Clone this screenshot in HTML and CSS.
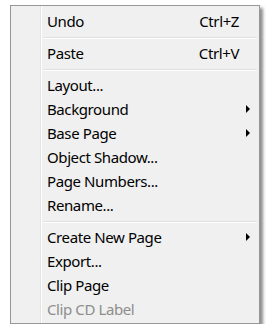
FILE: index.html
```html
<!DOCTYPE html>
<html lang="en">
<head>
    <meta charset="UTF-8">
    <title>Context Menu</title>
    <link rel="stylesheet" href="styles.css">
</head>
<body>
    <div class="menu">
        <div class="item"><span class="label">Undo</span><span class="key">Ctrl+Z</span><span class="sub"></span></div>
        <div class="sep"></div>
        <div class="item"><span class="label">Paste</span><span class="key">Ctrl+V</span><span class="sub"></span></div>
        <div class="sep"></div>
        <div class="item"><span class="label">Layout...</span><span class="key"></span><span class="sub"></span></div>
        <div class="item"><span class="label">Background</span><span class="key"></span><span class="sub"><i class="arrow"></i></span></div>
        <div class="item"><span class="label">Base Page</span><span class="key"></span><span class="sub"><i class="arrow"></i></span></div>
        <div class="item"><span class="label">Object Shadow...</span><span class="key"></span><span class="sub"></span></div>
        <div class="item"><span class="label">Page Numbers...</span><span class="key"></span><span class="sub"></span></div>
        <div class="item"><span class="label">Rename...</span><span class="key"></span><span class="sub"></span></div>
        <div class="sep"></div>
        <div class="item"><span class="label">Create New Page</span><span class="key"></span><span class="sub"><i class="arrow"></i></span></div>
        <div class="item"><span class="label">Export...</span><span class="key"></span><span class="sub"></span></div>
        <div class="item"><span class="label">Clip Page</span><span class="key"></span><span class="sub"></span></div>
        <div class="item disabled"><span class="label">Clip CD Label</span><span class="key"></span><span class="sub"></span></div>
    </div>
</body>
</html>
```

FILE: styles.css
```css
body {
    margin: 0;
    background-color: #ffffff;
    font-family: "Noto Sans", "Open Sans", sans-serif;
    font-size: 15px;
    letter-spacing: -0.4px;
    color: #000000;
}
.menu {
    width: 244px;
    margin: 5px 0 0 10px;
    padding: 3px 2px 2px 2px;
    border: 1px solid #979797;
    background: linear-gradient(to right, transparent 29px, #e2e3e3 29px, #e2e3e3 30px, #ffffff 30px, #ffffff 31px, transparent 31px), #f0f0f0;
    box-shadow: 3px 3px 3px rgba(0, 0, 0, 0.45);
}
.item {
    display: flex;
    align-items: center;
    height: 24px;
    padding-left: 34px;
    white-space: nowrap;
}
.label {
    flex: 1;
}
.key {
    text-align: right;
    margin-right: 3px;
}
.sub {
    width: 15px;
    padding-left: 4px;
    box-sizing: border-box;
    display: flex;
    align-items: center;
}
.arrow {
    display: block;
    width: 0;
    height: 0;
    border-left: 4px solid #000000;
    border-top: 4px solid transparent;
    border-bottom: 4px solid transparent;
}
.disabled {
    color: #8d8d8d;
}
.sep {
    height: 1px;
    margin: 4px 0 2px 30px;
    background-color: #e0e0e0;
    border-bottom: 1px solid #ffffff;
}
```
